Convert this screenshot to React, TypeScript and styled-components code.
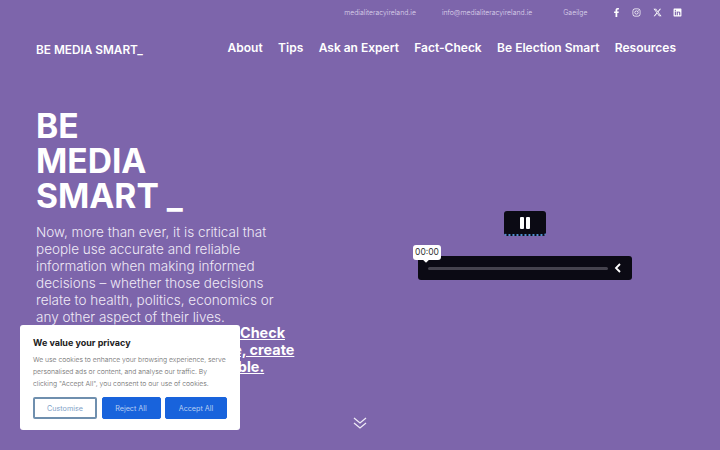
import React from "react";
import styled, { createGlobalStyle } from "styled-components";
import { FaFacebookF, FaInstagram, FaLinkedin } from "react-icons/fa";
import { FaXTwitter } from "react-icons/fa6";

const Global = createGlobalStyle`
  html, body { margin: 0; padding: 0; height: 100%; }
  body { background: #7d65ab; font-family: Inter, "Liberation Sans", sans-serif; color: #fff; overflow: hidden; }
  * { box-sizing: border-box; }
`;

const Page = styled.div`
  position: relative;
  width: 720px;
  height: 450px;
  overflow: hidden;
  background: #7d65ab;
`;

const TopBar = styled.div`
  display: flex;
  justify-content: flex-end;
  align-items: center;
  height: 24px;
  padding-right: 38px;
  font-size: 6.9px;
  font-weight: 300;
  color: #ded6ec;
`;

const TopLink = styled.span<{ $gap: number }>`
  margin-right: ${(p) => p.$gap}px;
`;

const Socials = styled.div`
  display: flex;
  align-items: center;
  gap: 11.5px;
  color: #fff;
  font-size: 9px;
`;

const Header = styled.header`
  display: flex;
  justify-content: space-between;
  align-items: center;
  height: 47px;
  padding: 0 44px 0 36px;
`;

const Logo = styled.div`
  font-size: 11.8px;
  font-weight: 600;
  padding-top: 5px;
`;

const Nav = styled.nav`
  display: flex;
  gap: 15.4px;
  font-size: 12px;
  font-weight: 600;
`;

const Hero = styled.main`
  display: flex;
  padding: 37px 0 0 36px;
`;

const Copy = styled.div`
  width: 262px;
  flex: none;
`;

const Title = styled.h1`
  margin: 0 0 10.5px;
  font-size: 33.6px;
  line-height: 35px;
  font-weight: 700;
`;

const Lead = styled.p`
  margin: 0 0 -2px;
  width: 245px;
  font-size: 13.5px;
  line-height: 17px;
  font-weight: 300;
  color: #efeaf6;
`;

const Strong = styled.p`
  margin: 0;
  font-size: 14.4px;
  line-height: 17px;
  font-weight: 700;
  text-decoration: underline;
  white-space: nowrap;
`;

const PlayerArea = styled.div`
  display: flex;
  flex-direction: column;
  align-items: center;
  margin-left: 120px;
  padding-top: 103px;
  width: 214px;
`;

const PauseBox = styled.div`
  display: flex;
  align-items: center;
  justify-content: center;
  gap: 2.5px;
  width: 42px;
  height: 25px;
  background: #0b0a14;
  border-radius: 3px;
  border-bottom: 2px dotted #4f8fd0;
`;

const PauseBar = styled.span`
  width: 3.5px;
  height: 12px;
  background: #fff;
  border-radius: 1px;
`;

const Bar = styled.div`
  position: relative;
  display: flex;
  align-items: center;
  gap: 6px;
  width: 214px;
  height: 24px;
  margin-top: 20px;
  padding: 0 10px;
  background: #0b0a14;
  border-radius: 3px;
`;

const Track = styled.div`
  flex: 1;
  height: 3px;
  background: #45434e;
  border-radius: 2px;
`;

const Tip = styled.div`
  position: absolute;
  left: -5px;
  top: -11px;
  width: 28px;
  height: 15px;
  background: #fff;
  border-radius: 3px;
  color: #333;
  font-size: 8.5px;
  line-height: 15px;
  text-align: center;
  &::after {
    content: "";
    position: absolute;
    left: 11px;
    bottom: -2px;
    width: 4px;
    height: 4px;
    background: #fff;
    transform: rotate(45deg);
  }
`;

const Cookie = styled.aside`
  position: absolute;
  left: 20px;
  top: 325px;
  width: 220px;
  height: 105px;
  padding: 12px 13px 0;
  background: #fff;
  border-radius: 3px;
`;

const CookieTitle = styled.div`
  font-size: 9px;
  font-weight: 700;
  line-height: 12px;
  color: #212121;
  margin-bottom: 5px;
`;

const CookieText = styled.p`
  margin: 0 0 7px;
  font-size: 6.8px;
  font-weight: 300;
  line-height: 12px;
  color: #6a6a6a;
  white-space: nowrap;
`;

const Buttons = styled.div`
  display: flex;
  justify-content: space-between;
`;

const Btn = styled.button<{ $outline?: boolean; $w: number }>`
  width: ${(p) => p.$w}px;
  height: 22px;
  padding: 0;
  font: 400 7.2px Inter, "Liberation Sans", sans-serif;
  border-radius: 2px;
  border: ${(p) => (p.$outline ? "2px solid #6f8fae" : "1px solid #1863dc")};
  background: ${(p) => (p.$outline ? "#fff" : "#1863dc")};
  color: ${(p) => (p.$outline ? "#7f9fc8" : "#b9cff3")};
`;

const Chevron = styled.svg`
  position: absolute;
  left: 353px;
  top: 417px;
`;

export default function App() {
  return (
    <Page>
      <Global />
      <TopBar>
        <TopLink $gap={26}>medialiteracyireland.ie</TopLink>
        <TopLink $gap={31}>info@medialiteracyireland.ie</TopLink>
        <TopLink $gap={24}>Gaeilge</TopLink>
        <Socials>
          <FaFacebookF />
          <FaInstagram />
          <FaXTwitter />
          <FaLinkedin />
        </Socials>
      </TopBar>
      <Header>
        <Logo>BE MEDIA SMART_</Logo>
        <Nav>
          <span>About</span>
          <span>Tips</span>
          <span>Ask an Expert</span>
          <span>Fact-Check</span>
          <span>Be Election Smart</span>
          <span>Resources</span>
        </Nav>
      </Header>
      <Hero>
        <Copy>
          <Title>
            BE
            <br />
            MEDIA
            <br />
            SMART _
          </Title>
          <Lead>
            Now, more than ever, it is critical that people use accurate and reliable information when making
            informed decisions – whether those decisions relate to health, politics, economics or any other aspect
            of their lives.
          </Lead>
          <Strong>Stop, think, then take time to Check</Strong>
          <Strong>the source, assess the article, create</Strong>
          <Strong>and always send what's reliable.</Strong>
        </Copy>
        <PlayerArea>
          <PauseBox>
            <PauseBar />
            <PauseBar />
          </PauseBox>
          <Bar>
            <Tip>00:00</Tip>
            <Track />
            <svg width="8" height="10" viewBox="0 0 8 10">
              <path d="M6 1 2 5l4 4" fill="none" stroke="#fff" strokeWidth="1.8" />
            </svg>
          </Bar>
        </PlayerArea>
      </Hero>
      <Cookie>
        <CookieTitle>We value your privacy</CookieTitle>
        <CookieText>
          We use cookies to enhance your browsing experience, serve
          <br />
          personalised ads or content, and analyse our traffic. By
          <br />
          clicking "Accept All", you consent to our use of cookies.
        </CookieText>
        <Buttons>
          <Btn $outline $w={64}>Customise</Btn>
          <Btn $w={59}>Reject All</Btn>
          <Btn $w={62}>Accept All</Btn>
        </Buttons>
      </Cookie>
      <Chevron width="14" height="12" viewBox="0 0 14 12">
        <path d="M1 1l6 5 6-5M1 6l6 5 6-5" fill="none" stroke="#efeaf6" strokeWidth="1.3" />
      </Chevron>
    </Page>
  );
}
